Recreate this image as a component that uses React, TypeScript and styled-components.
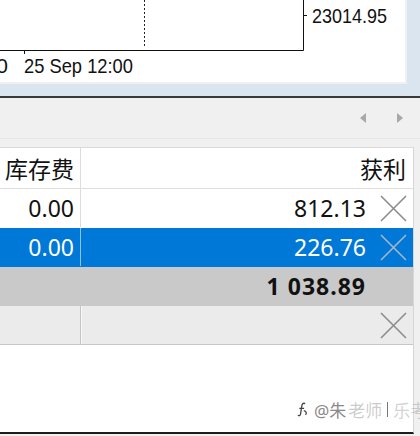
import React from 'react'
import styled, { createGlobalStyle } from 'styled-components'

const GlobalStyle = createGlobalStyle`
  html, body {
    margin: 0;
    padding: 0;
    background: #f0f0f0;
  }
`

const Page = styled.div`
  position: relative;
  width: 420px;
  height: 436px;
  overflow: hidden;
  background: #f0f0f0;
  font-family: 'Noto Sans', 'Noto Sans CJK SC', sans-serif;
  display: flex;
  flex-direction: column;
`

const ChartFrame = styled.div`
  height: 96px;
  background: #dbe5f0;
  padding: 0 13px 12px 0;
  box-sizing: border-box;
  flex-shrink: 0;
`

const ChartWindow = styled.div`
  height: 100%;
  background: #fff;
  border-right: 2px solid #eef0f2;
  border-bottom: 2px solid #eef0f2;
  box-sizing: border-box;
  overflow: hidden;
`

const Splitter = styled.div`
  height: 2px;
  background: #3a3a3a;
  flex-shrink: 0;
`

const Terminal = styled.div`
  flex: 1;
  display: flex;
  flex-direction: column;
`

const Toolbar = styled.div`
  height: 40px;
  border-bottom: 1px solid #e4e4e4;
  display: flex;
  align-items: center;
  justify-content: flex-end;
  gap: 31px;
  padding-right: 17px;
`

const Arrow = styled.span<{ $dir: 'left' | 'right' }>`
  width: 0;
  height: 0;
  border-top: 5px solid transparent;
  border-bottom: 5px solid transparent;
  ${(p) =>
    p.$dir === 'left'
      ? 'border-right: 6px solid #a8a8a8;'
      : 'border-left: 6px solid #a8a8a8;'}
`

const TableWrap = styled.div`
  margin-top: 8px;
  width: 413px;
  height: 284px;
  background: #fff;
  border-top: 1px solid #dadada;
  border-right: 1px solid #d6d6d6;
  border-bottom: 2px solid #1c1c1c;
  display: flex;
  flex-direction: column;
`

type RowKind = 'header' | 'normal' | 'selected' | 'total' | 'empty'

const rowBg: Record<RowKind, string> = {
  header: '#fff',
  normal: '#fff',
  selected: '#0078d7',
  total: '#c9c9c9',
  empty: '#ebebeb',
}

const dividerColor: Record<RowKind, string> = {
  header: '#dcdcdc',
  normal: '#dcdcdc',
  selected: 'rgba(255,255,255,0.55)',
  total: '#c9c9c9',
  empty: '#c4c4c4',
}

const Row = styled.div<{ $kind: RowKind }>`
  display: grid;
  grid-template-columns: 81px 1fr;
  height: ${(p) => (p.$kind === 'header' ? 41 : 39)}px;
  box-sizing: border-box;
  background: ${(p) => rowBg[p.$kind]};
  color: ${(p) => (p.$kind === 'selected' ? '#fff' : '#111')};
  font-size: 23px;
  font-weight: ${(p) => (p.$kind === 'total' ? 700 : 400)};
  letter-spacing: ${(p) => (p.$kind === 'total' ? '1px' : '0')};
  border-bottom: 1px solid
    ${(p) =>
      p.$kind === 'header' ? '#dedede' : p.$kind === 'empty' ? '#c6c6c6' : 'transparent'};
`

const FirstCell = styled.div<{ $kind: RowKind }>`
  display: flex;
  align-items: center;
  justify-content: flex-end;
  padding-right: 6px;
  border-right: 1px solid ${(p) => dividerColor[p.$kind]};
  box-shadow: ${(p) => (p.$kind === 'empty' ? '1px 0 0 #f8f8f8' : 'none')};
`

const ValueCell = styled.div<{ $padRight: number }>`
  display: flex;
  align-items: center;
  justify-content: flex-end;
  padding-right: ${(p) => p.$padRight}px;
  gap: 14px;
`

const Value = styled.span`
  line-height: 1;
`

const CloseBox = styled.span`
  display: flex;
  width: 27px;
  height: 27px;
`

const Footer = styled.div`
  flex: 1;
`

const Watermark = styled.div`
  position: absolute;
  left: 297px;
  top: 397px;
  display: flex;
  align-items: center;
  gap: 2px;
  font-size: 17px;
  white-space: nowrap;
  color: #8a8a8a;
`

const LogoBox = styled.span`
  display: flex;
  margin-right: 4px;
`

const Faded = styled.span<{ $alpha: number }>`
  color: rgba(140, 140, 140, ${(p) => p.$alpha});
`

const Bar = styled.span`
  width: 1px;
  height: 15px;
  margin: 0 3px 0 3px;
  background: #777;
`

const CloseIcon = ({ color }: { color: string }) => (
  <CloseBox>
    <svg width="27" height="27" viewBox="0 0 27 27">
      <path d="M1 1 L26 26 M26 1 L1 26" stroke={color} strokeWidth="1.6" fill="none" />
    </svg>
  </CloseBox>
)

const ChartSvg = () => (
  <svg width="407" height="82" viewBox="0 0 407 82">
    <g fontFamily="'Liberation Sans', Arial, sans-serif" fontSize="21" fill="#111">
      <line x1="144.5" y1="0" x2="144.5" y2="48" stroke="#222" strokeDasharray="2 2" />
      <path d="M0 50.5 H303.5 V0" stroke="#111" fill="none" />
      <line x1="303" y1="15.5" x2="307" y2="15.5" stroke="#111" />
      <line x1="24.5" y1="51" x2="24.5" y2="54" stroke="#111" />
      <text x="312" y="23" textLength="75" lengthAdjust="spacingAndGlyphs">
        23014.95
      </text>
      <text x="24" y="73" textLength="109" lengthAdjust="spacingAndGlyphs">
        25 Sep 12:00
      </text>
      <text x="8" y="73" textAnchor="end">
        12:00
      </text>
    </g>
  </svg>
)

const Logo = () => (
  <LogoBox>
    <svg width="11" height="15" viewBox="0 0 10 14">
      <path
        d="M7.5 1.5 C5.5 0.5 4.5 2 4.2 4.5 L3.2 11 C2.9 13 1.5 13.2 0.8 12.2 M2 6 H6.5 M6.2 8 C8.5 8.5 9.2 10.5 7.8 12"
        stroke="#444"
        strokeWidth="1.2"
        fill="none"
      />
    </svg>
  </LogoBox>
)

type DataRow = { kind: RowKind; swap: string; profit: string; close?: boolean }

const rows: DataRow[] = [
  { kind: 'normal', swap: '0.00', profit: '812.13', close: true },
  { kind: 'selected', swap: '0.00', profit: '226.76', close: true },
  { kind: 'total', swap: '', profit: '1 038.89' },
  { kind: 'empty', swap: '', profit: '', close: true },
]

const closeColor = (kind: RowKind) => (kind === 'selected' ? '#a9b6c4' : '#8c8c8c')

export default function App() {
  return (
    <Page>
      <GlobalStyle />
      <ChartFrame>
        <ChartWindow>
          <ChartSvg />
        </ChartWindow>
      </ChartFrame>
      <Splitter />
      <Terminal>
        <Toolbar>
          <Arrow $dir="left" />
          <Arrow $dir="right" />
        </Toolbar>
        <TableWrap>
          <Row $kind="header">
            <FirstCell $kind="header">库存费</FirstCell>
            <ValueCell $padRight={7}>获利</ValueCell>
          </Row>
          {rows.map((r, i) => (
            <Row key={i} $kind={r.kind}>
              <FirstCell $kind={r.kind}>
                <Value>{r.swap}</Value>
              </FirstCell>
              <ValueCell $padRight={r.close ? 6 : 47}>
                <Value>{r.profit}</Value>
                {r.close && <CloseIcon color={closeColor(r.kind)} />}
              </ValueCell>
            </Row>
          ))}
          <Footer />
        </TableWrap>
      </Terminal>
      <Watermark>
        <Logo />
        <span>@朱</span>
        <Faded $alpha={0.45}>老师</Faded>
        <Bar />
        <Faded $alpha={0.4}>乐考</Faded>
      </Watermark>
    </Page>
  )
}
